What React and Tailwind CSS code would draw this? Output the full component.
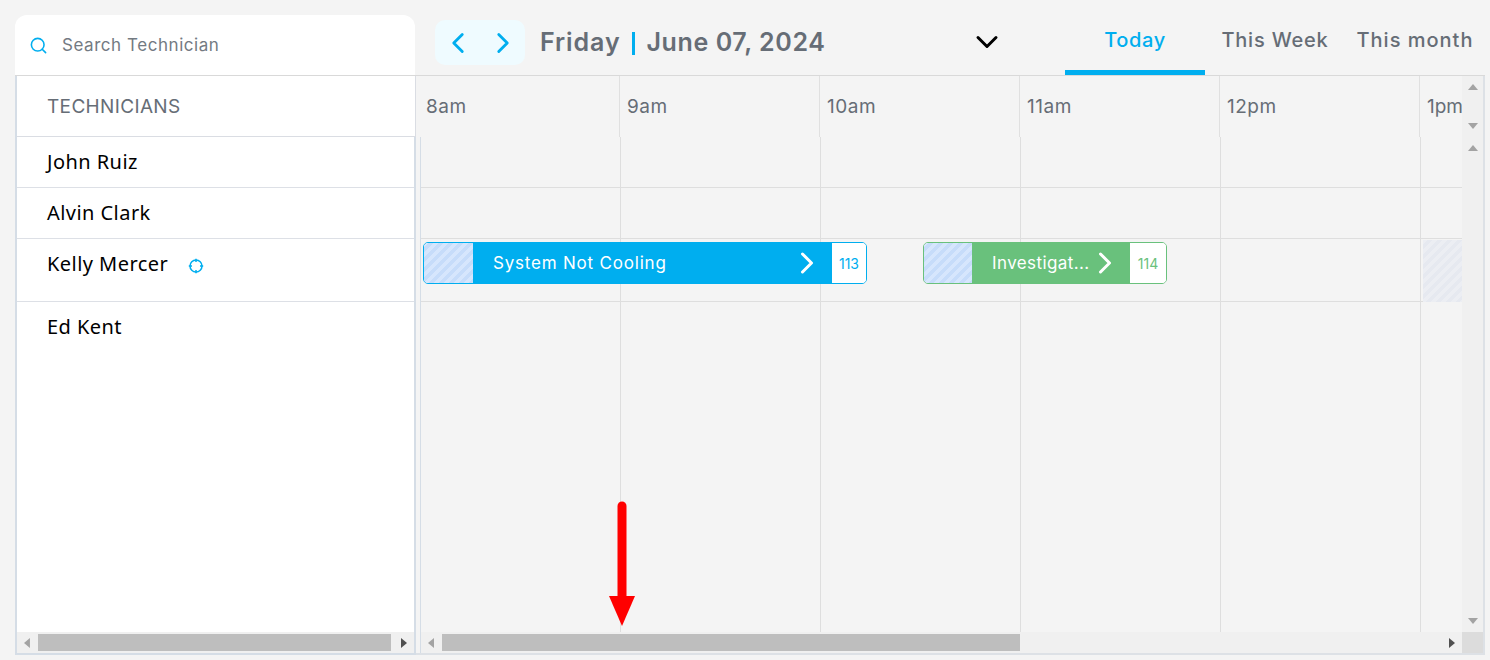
import React from 'react';
import { Search, ChevronLeft, ChevronRight, ChevronDown } from 'lucide-react';

const HOURS = ['8am', '9am', '10am', '11am', '12pm', '1pm'];
const TECHS = [
  { name: 'John Ruiz', h: 'h-[51px]' },
  { name: 'Alvin Clark', h: 'h-[51px]' },
  { name: 'Kelly Mercer', h: 'h-[63px]', located: true },
];

const Arrow = ({ dir, dark }) => {
  const points = {
    up: '0,7 5,1 10,7',
    down: '0,1 10,1 5,7',
    left: '7,0 7,10 1,5',
    right: '1,0 1,10 7,5',
  }[dir];
  const vertical = dir === 'up' || dir === 'down';
  return (
    <svg width={vertical ? 10 : 8} height={vertical ? 8 : 10} viewBox={vertical ? '0 0 10 8' : '0 0 8 10'}>
      <polygon points={points} fill={dark ? '#505050' : '#a3a3a3'} />
    </svg>
  );
};

const Target = () => (
  <svg width="16" height="16" viewBox="0 0 16 16" fill="none" stroke="#00aeef" strokeWidth="1.5">
    <circle cx="8" cy="8" r="6" />
    <path d="M8 0.8V4M8 12v3.2M0.8 8H4M12 8h3.2" />
  </svg>
);

const EventBar = ({ className, hatch, fill, title, tracking, num, numColor, numW }) => (
  <div className={`absolute top-[3px] h-[42px] flex rounded-[5px] border overflow-hidden ${className}`}>
    <div className={`h-full shrink-0 bg-[repeating-linear-gradient(135deg,#d6e6fd_0px,#d6e6fd_3.5px,#c6dcfa_3.5px,#c6dcfa_7px)] ${hatch}`} />
    <div className={`flex-1 min-w-0 h-full flex items-center pl-[20px] pr-[7px] justify-between ${fill}`}>
      <span className={`text-white text-[17px] pt-[2px] whitespace-nowrap ${tracking}`}>{title}</span>
      <ChevronRight size={36} color="#fff" strokeWidth={2} className="shrink-0 -ml-[12px]" />
    </div>
    <div className={`h-full shrink-0 bg-white flex items-center justify-center text-[14px] ${numW} ${numColor}`}>
      {num}
    </div>
  </div>
);

export default function App() {
  return (
    <div className="relative w-[1490px] h-[660px] overflow-hidden bg-[#f4f4f4] font-['Inter',sans-serif] text-[#666d76]">
      {/* Top bar */}
      <div className="flex h-[75px] pl-[15px]">
        <div className="mt-[15px] w-[400px] h-[60px] bg-white rounded-t-[12px] flex items-center pl-[14px]">
          <Search size={19} color="#00aeef" strokeWidth={2} />
          <span className="ml-[14px] pt-[2px] text-[17px] tracking-[0.55px] text-[#737a82]">Search Technician</span>
        </div>
        <div className="ml-[20px] mt-[20px] w-[90px] h-[45px] rounded-[10px] bg-[#effbff] flex items-center justify-between pl-[6px] pr-[5px]">
          <ChevronLeft size={34} color="#00aeef" strokeWidth={2} />
          <ChevronRight size={34} color="#00aeef" strokeWidth={2} />
        </div>
        <div className="ml-[15px] mt-[25px] h-[36px] w-[465px] flex items-center text-[25px] font-semibold">
          <span className="tracking-[0.9px]">Friday</span>
          <span className="ml-[11px] mr-[12px] w-[3px] h-[23px] bg-[#00aeef]" />
          <span className="tracking-[0.6px]">June 07, 2024</span>
          <ChevronDown size={36} color="#000" strokeWidth={2} className="ml-auto -mt-[2px]" />
        </div>
        <div className="ml-[60px] flex text-[20px] font-medium">
          <div className="w-[140px] h-[75px] pt-[25px] text-center text-[#00aeef] tracking-[0.6px] border-b-[5px] border-[#00aeef]">Today</div>
          <div className="w-[140px] h-[75px] pt-[25px] text-center tracking-[0.8px]">This Week</div>
          <div className="w-[140px] h-[75px] pt-[25px] text-center tracking-[1px]">This month</div>
        </div>
      </div>

      {/* Schedule */}
      <div className="flex ml-[15px] w-[1470px] h-[580px] border-t border-[#d9d9d9]">
        {/* Technician column */}
        <div className="w-[401px] flex flex-col border-l-2 border-b-2 border-[#d5dde6]">
          <div className="h-[61px] shrink-0 bg-white border-b border-r border-[#dadde3] pl-[30px] pt-[2px] flex items-center text-[19px] tracking-[0.35px]">
            TECHNICIANS
          </div>
          <div className="flex-1 flex flex-col bg-white border-r-2 border-[#d5dde6] font-['Noto_Sans',sans-serif] text-black text-[20px] tracking-[0.45px] min-h-0">
            {TECHS.map(t => (
              <div key={t.name} className={`${t.h} shrink-0 border-b border-[#dde0e6] pl-[30px] pt-[10px] flex items-start`}>
                <span>{t.name}</span>
                {t.located && <span className="ml-[20px] mt-[9px]"><Target /></span>}
              </div>
            ))}
            <div className="flex-1 pl-[30px] pt-[10px]">Ed Kent</div>
            <div className="h-[21px] shrink-0 bg-[#f0f0f0] flex items-center px-[6px] gap-[7px]">
              <Arrow dir="left" />
              <div className="w-[355px] h-[17px] bg-[#bebebe]" />
              <span className="ml-[2px]"><Arrow dir="right" dark /></span>
            </div>
          </div>
        </div>

        {/* Timeline column */}
        <div className="flex-1 flex flex-col border-r-2 border-b-2 border-[#dde1e6] min-w-0">
          <div className="h-[61px] shrink-0 flex">
            <div className="flex-1 flex overflow-hidden text-[19px] tracking-[0.5px]">
              {HOURS.map((hour, i) => (
                <div
                  key={hour}
                  className={`${i === 0 ? 'w-[204px] pl-[10px]' : i === 5 ? 'w-[43px] pl-[7px] tracking-normal' : 'w-[200px] pl-[7px]'} h-full shrink-0 border-r border-[#e0e0e0] last:border-r-0 pt-[2px] flex items-center`}
                >
                  {hour}
                </div>
              ))}
            </div>
            <div className="w-[21px] shrink-0 bg-[#f0f0f0] flex flex-col items-center justify-between py-[7px]">
              <Arrow dir="up" />
              <Arrow dir="down" />
            </div>
          </div>

          <div className="flex-1 flex min-h-0">
            <div className="ml-[4px] flex-1 flex flex-col border-l border-[#d5dde6] min-w-0">
              <div className="flex-1 flex min-h-0">
                <div className="flex-1 flex flex-col min-w-0 overflow-hidden">
                  {[0, 1, 2, 3].map(row => (
                    <div
                      key={row}
                      className={`relative flex shrink-0 ${row < 2 ? 'h-[51px] border-b border-[#dedede]' : row === 2 ? 'h-[63px] border-b border-[#dedede]' : 'flex-1'}`}
                    >
                      {HOURS.map(hour => (
                        <div key={hour} className="w-[200px] shrink-0 border-r border-[#dedede]" />
                      ))}
                      {row === 2 && (
                        <>
                          <EventBar
                            className="left-[2px] w-[444px] border-[#00aeef]"
                            hatch="w-[49px]"
                            fill="bg-[#00aeef]"
                            title="System Not Cooling"
                            tracking="tracking-[0.8px]"
                            num="113"
                            numColor="text-[#00aeef]"
                            numW="w-[34px]"
                          />
                          <EventBar
                            className="left-[502px] w-[244px] border-[#69c17c]"
                            hatch="w-[48px]"
                            fill="bg-[#69c17c]"
                            title="Investigat..."
                            tracking="tracking-[0.4px]"
                            num="114"
                            numColor="text-[#69c17c]"
                            numW="w-[36px]"
                          />
                          <div className="absolute left-[1002px] top-[1px] w-[40px] h-[62px] bg-[repeating-linear-gradient(135deg,#eceef3_0px,#eceef3_3.5px,#e6e9f0_3.5px,#e6e9f0_7px)]" />
                        </>
                      )}
                    </div>
                  ))}
                </div>
                <div className="w-[21px] shrink-0 bg-[#f0f0f0] flex flex-col items-center justify-between py-[7px]">
                  <Arrow dir="up" />
                  <Arrow dir="down" />
                </div>
              </div>
              <div className="h-[21px] shrink-0 flex">
                <div className="flex-1 bg-[#f0f0f0] flex items-center pl-[6px] pr-[6px]">
                  <Arrow dir="left" />
                  <div className="ml-[7px] w-[578px] h-[17px] bg-[#bebebe]" />
                  <span className="ml-auto"><Arrow dir="right" dark /></span>
                </div>
                <div className="w-[21px] bg-[#dcdcdc]" />
              </div>
            </div>
          </div>
        </div>
      </div>

      {/* Annotation arrow */}
      <svg className="absolute left-[605px] top-[498px]" width="34" height="132" viewBox="0 0 34 132">
        <path d="M17 8V100" stroke="#ff0000" strokeWidth="9" strokeLinecap="round" />
        <polygon points="4,98 30,98 17,128" fill="#ff0000" />
      </svg>
    </div>
  );
}
